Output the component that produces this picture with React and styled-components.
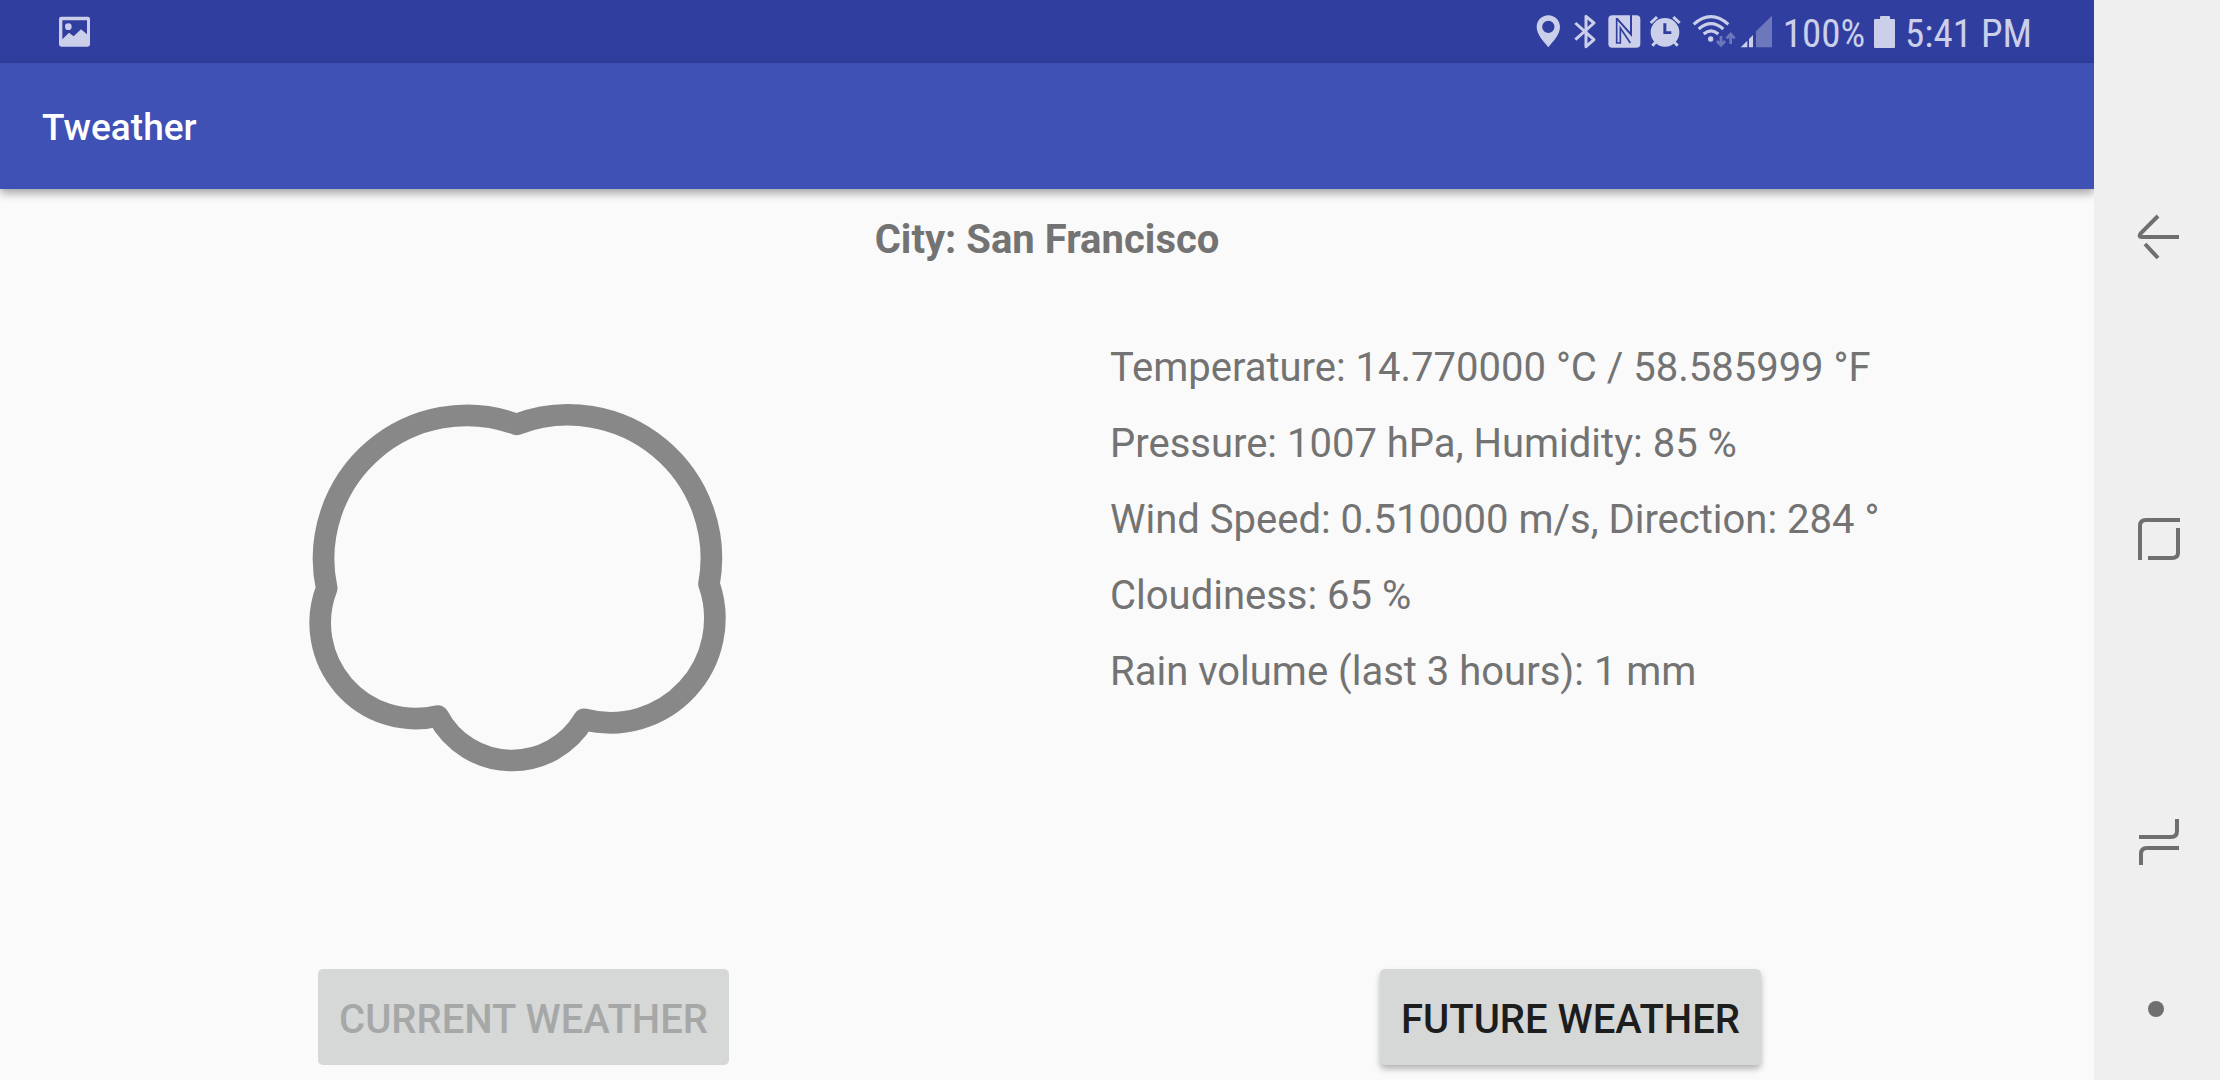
import React from "react";
import styled, { createGlobalStyle } from "styled-components";

const GlobalStyle = createGlobalStyle`
  *, *::before, *::after { box-sizing: border-box; }
  body {
    margin: 0;
    background: #fafafa;
    font-family: Roboto, "Liberation Sans", sans-serif;
    color: #737373;
  }
`;

const Screen = styled.div`
  display: flex;
  min-height: 100vh;
`;

const AppColumn = styled.div`
  flex: 1;
  min-width: 0;
  display: flex;
  flex-direction: column;
`;

const StatusBar = styled.div`
  display: flex;
  align-items: center;
  justify-content: space-between;
  height: 63px;
  padding: 0 62px 0 56px;
  background: #303f9f;
  color: #cbcfe9;
`;

const StatusGroup = styled.div`
  display: flex;
  align-items: center;
  gap: ${(p) => p.$gap || 0}px;
`;

const StatusText = styled.span`
  font-family: "Roboto Condensed", Roboto, "Liberation Sans", sans-serif;
  font-size: 39px;
  line-height: 48px;
  padding-top: 4px;
  white-space: nowrap;
`;

const Icon = styled.svg`
  display: block;
  flex: none;
  overflow: visible;
`;

const AppBar = styled.header`
  display: flex;
  align-items: center;
  height: 126px;
  padding: 4px 42px 0;
  background: #3f51b5;
  box-shadow: 0 4px 9px rgba(0, 0, 0, 0.36);
`;

const AppTitle = styled.h1`
  margin: 0;
  font-size: 37px;
  line-height: 48px;
  font-weight: 500;
  color: #fff;
`;

const Content = styled.main`
  flex: 1;
  display: flex;
  flex-direction: column;
  padding: 27px 0 15px;
`;

const City = styled.h2`
  margin: 0;
  font-size: 40px;
  line-height: 48px;
  font-weight: 700;
  text-align: center;
`;

const Columns = styled.div`
  display: grid;
  grid-template-columns: 1fr 1fr;
  flex: ${(p) => (p.$grow ? 1 : "none")};
`;

const Picture = styled.div`
  display: flex;
  justify-content: center;
  padding-top: 116px;
`;

const Readings = styled.ul`
  display: flex;
  flex-direction: column;
  gap: 28px;
  margin: 0;
  padding: 80px 0 0 63px;
  list-style: none;
`;

const Reading = styled.li`
  font-size: 40px;
  line-height: 48px;
`;

const ButtonCell = styled.div`
  display: flex;
  justify-content: center;
`;

const RaisedButton = styled.button`
  height: 96px;
  padding: 6px 21px 0;
  border: 0;
  border-radius: 5px;
  background: #d6d7d7;
  color: #1d1d1d;
  font: 500 40px/48px Roboto, "Liberation Sans", sans-serif;
  text-transform: uppercase;
  white-space: nowrap;
  box-shadow: 0 4px 6px rgba(0, 0, 0, 0.28);

  &:disabled {
    color: #a6a8a7;
    box-shadow: none;
  }
`;

const NavBar = styled.nav`
  display: flex;
  flex-direction: column;
  flex: none;
  width: 126px;
  padding: 86px 0 55px;
  background: #efefef;
`;

const NavButton = styled.button`
  display: flex;
  align-items: center;
  justify-content: center;
  flex: ${(p) => (p.$small ? "0 0 32px" : "1")};
  padding: 0;
  border: 0;
  background: none;
  color: #6f6f6f;
`;

const NavIcon = ({ children }) => (
  <Icon width="48" height="48" viewBox="0 0 48 48" fill="none" stroke="currentColor" strokeWidth="4" aria-hidden="true">
    {children}
  </Icon>
);

const PictureIcon = () => (
  <Icon width="37" height="36" viewBox="168 40 111 108" aria-hidden="true">
    <path
      fill="currentColor"
      fillRule="evenodd"
      d="M184 48H263Q270 48 270 55V131Q270 138 263 138H184Q177 138 177 131V55Q177 48 184 48ZM187 59V116L207 96L221 107L243 86L261 101V59Z"
    />
    <circle cx="205" cy="78" r="10" fill="currentColor" />
  </Icon>
);

const StatusIcons = () => (
  <Icon width="240" height="36" viewBox="45 42 720 108" fill="currentColor" aria-hidden="true">
    <path
      fillRule="evenodd"
      d="M85 46C104 46 120 61 120 81C120 104 97 127 85 142C73 127 50 104 50 81C50 61 66 46 85 46ZM85 62A18 18 0 1 0 85 99A18 18 0 1 0 85 62Z"
    />
    <path
      d="M166 69L222 119L198 140V49L222 69L166 119"
      fill="none"
      stroke="currentColor"
      strokeWidth="9"
      strokeLinejoin="round"
    />
    <rect x="265" y="46" width="96" height="97" rx="12" />
    <path d="M290 54V129H301V84L331 129" fill="none" stroke="#303f9f" strokeWidth="5" />
    <path d="M290 55L333 103V44" fill="none" stroke="#303f9f" strokeWidth="6" />
    <path
      fillRule="evenodd"
      d="M435 54A43 43 0 1 1 435 140A43 43 0 1 1 435 54ZM430 70V102H454V94H439V70Z"
    />
    <path
      d="M392 69L411 51M479 69L460 51M408 125L397 137M462 125L473 137"
      fill="none"
      stroke="currentColor"
      strokeWidth="9"
    />
    <g fill="none" stroke="currentColor" strokeWidth="9">
      <path d="M521 73Q573 27 625 73" />
      <path d="M536 87Q573 55 610 87" />
      <path d="M551 102Q573 83 595 102" />
    </g>
    <circle cx="572" cy="117" r="8" />
    <g fill="none" stroke="currentColor" strokeWidth="8" opacity="0.4">
      <path d="M603 108V136M591 123L603 136L615 123" />
      <path d="M632 132V102M620 115L632 102L644 115" />
    </g>
    <path d="M662 142L682 122V142Z" />
    <path d="M687 117L699 105V142H687Z" />
    <path d="M708 94L756 47V142H708Z" opacity="0.4" />
  </Icon>
);

const BatteryIcon = () => (
  <Icon width="22" height="32" viewBox="0 0 22 32" fill="currentColor" aria-hidden="true">
    <path d="M6 1Q6 0 7 0H15Q16 0 16 1V3H20Q21 3 21 4V31Q21 32 20 32H1Q0 32 0 31V4Q0 3 1 3H6Z" />
  </Icon>
);

const CloudPicture = () => (
  <Icon width="467" height="420" viewBox="0 0 1401 1260" role="img" aria-label="Cloudy">
    <path
      d="M110 625A430 430 0 0 1 680 133A430 430 0 0 1 1257 612A313 313 0 0 1 882 1018A251 251 0 0 1 444 1008A287 287 0 0 1 110 625Z"
      fill="none"
      stroke="#888"
      strokeWidth="65"
      strokeLinejoin="round"
    />
  </Icon>
);

const readings = [
  "Temperature: 14.770000 °C / 58.585999 °F",
  "Pressure: 1007 hPa, Humidity: 85 %",
  "Wind Speed: 0.510000 m/s, Direction: 284 °",
  "Cloudiness: 65 %",
  "Rain volume (last 3 hours): 1 mm",
];

export default function App() {
  return (
    <>
      <GlobalStyle />
      <Screen>
        <AppColumn>
          <StatusBar>
            <PictureIcon />
            <StatusGroup $gap={8}>
              <StatusIcons />
              <StatusGroup $gap={9}>
                <StatusText>100%</StatusText>
                <BatteryIcon />
                <StatusText>5:41 PM</StatusText>
              </StatusGroup>
            </StatusGroup>
          </StatusBar>
          <AppBar>
            <AppTitle>Tweather</AppTitle>
          </AppBar>
          <Content>
            <City>City: San Francisco</City>
            <Columns $grow>
              <Picture>
                <CloudPicture />
              </Picture>
              <Readings>
                {readings.map((text) => (
                  <Reading key={text}>{text}</Reading>
                ))}
              </Readings>
            </Columns>
            <Columns>
              <ButtonCell>
                <RaisedButton disabled>Current Weather</RaisedButton>
              </ButtonCell>
              <ButtonCell>
                <RaisedButton>Future Weather</RaisedButton>
              </ButtonCell>
            </Columns>
          </Content>
        </AppColumn>
        <NavBar>
          <NavButton aria-label="Back">
            <NavIcon>
              <path d="M46 24H9Q5 24 8 20L25 3M12 31L25 45" />
            </NavIcon>
          </NavButton>
          <NavButton aria-label="Home">
            <NavIcon>
              <path d="M47 5H13Q7 5 7 11V45M45 13V38Q45 43 39 43H15" />
            </NavIcon>
          </NavButton>
          <NavButton aria-label="Recent apps">
            <NavIcon>
              <path d="M44 1V13Q44 19 38 19H6M46 30H14Q8 30 8 36V47" />
            </NavIcon>
          </NavButton>
          <NavButton $small aria-label="Hide navigation">
            <Icon width="16" height="16" viewBox="0 0 16 16" aria-hidden="true">
              <circle cx="7" cy="8" r="8" fill="currentColor" />
            </Icon>
          </NavButton>
        </NavBar>
      </Screen>
    </>
  );
}
